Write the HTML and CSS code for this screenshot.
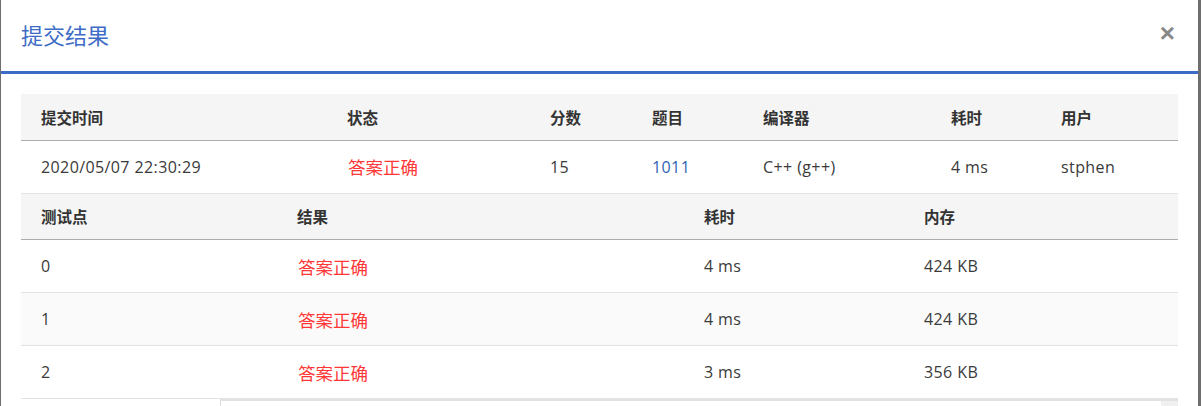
FILE: index.html
```html
<!DOCTYPE html>
<html lang="zh-CN">
<head>
<meta charset="utf-8">
<title>提交结果</title>
<link rel="stylesheet" href="styles.css">
</head>
<body>
<div class="modal">
  <div class="modal-header">
    <h4 class="modal-title">提交结果</h4>
    <span class="close">×</span>
  </div>
  <div class="modal-body">
    <table class="grid summary">
      <colgroup>
        <col style="width:306px"><col style="width:203px"><col style="width:102px"><col style="width:111px"><col style="width:188px"><col style="width:110px"><col style="width:137px">
      </colgroup>
      <thead>
        <tr><th>提交时间</th><th>状态</th><th>分数</th><th>题目</th><th>编译器</th><th>耗时</th><th>用户</th></tr>
      </thead>
      <tbody>
        <tr><td>2020/05/07 22:30:29</td><td class="ok">答案正确</td><td>15</td><td><a class="link">1011</a></td><td>C++ (g++)</td><td>4 ms</td><td>stphen</td></tr>
      </tbody>
    </table>
    <table class="grid cases">
      <colgroup>
        <col style="width:256px"><col style="width:407px"><col style="width:220px"><col style="width:274px">
      </colgroup>
      <thead>
        <tr><th>测试点</th><th>结果</th><th>耗时</th><th>内存</th></tr>
      </thead>
      <tbody>
        <tr><td>0</td><td class="ok">答案正确</td><td>4 ms</td><td>424 KB</td></tr>
        <tr class="alt"><td>1</td><td class="ok">答案正确</td><td>4 ms</td><td>424 KB</td></tr>
        <tr><td>2</td><td class="ok">答案正确</td><td>3 ms</td><td>356 KB</td></tr>
      </tbody>
    </table>
    <div class="below">
      <div class="below-inner"><span class="below-block"></span></div>
    </div>
  </div>
</div>
</body>
</html>
```

FILE: styles.css
```css
html, body {
  margin: 0;
  padding: 0;
}
body {
  background: #6e6e6e;
  width: 1201px;
  height: 406px;
  overflow: hidden;
  font-family: "Open Sans", "Noto Sans CJK SC", sans-serif;
  color: #333;
}
.modal {
  margin-left: 1px;
  width: 1197px;
  height: 406px;
  background: #fff;
}
.modal-header {
  height: 71px;
  border-bottom: 3px solid #3d6cc6;
  display: flex;
  align-items: center;
  justify-content: space-between;
  padding: 0 23px 0 20px;
}
.modal-title {
  margin: 0;
  font-family: "Noto Sans CJK SC", sans-serif;
  font-size: 22px;
  font-weight: normal;
  color: #3d6cc6;
  line-height: 1;
  padding-bottom: 3px;
}
.close {
  font-family: "Liberation Sans", sans-serif;
  font-size: 26px;
  font-weight: bold;
  color: #888;
  line-height: 1;
  padding-bottom: 6px;
}
.modal-body {
  padding: 20px 0 0 20px;
}
.grid {
  border-collapse: collapse;
  table-layout: fixed;
  width: 1157px;
}
.grid th {
  background: #f5f5f5;
  height: 45px;
  padding: 0 0 0 20px;
  text-align: left;
  font-family: "Noto Sans CJK SC", sans-serif;
  font-size: 15.5px;
  font-weight: bold;
  color: #333;
  border-bottom: 1px solid #acacac;
}
.grid thead tr {
  height: 46px;
}
.grid td {
  height: 52px;
  padding: 0 0 0 20px;
  font-size: 16px;
  letter-spacing: 0.4px;
  color: #3a3a3a;
  border-bottom: 1px solid #e3e3e3;
}
.grid tbody tr {
  height: 53px;
}
.grid td.ok {
  font-family: "Noto Sans CJK SC", sans-serif;
  color: #ff3737;
  font-size: 17.5px;
  letter-spacing: 0;
  padding-left: 21px;
}
.grid tr.alt td {
  background: #fafafa;
}
.link {
  color: #2f65b3;
  text-decoration: none;
}
.below {
  width: 1157px;
  padding-left: 199px;
  box-sizing: border-box;
}
.below-inner {
  height: 10px;
  border-top: 2px solid #e2e2e2;
  border-left: 1px solid #dcdcdc;
  display: flex;
  justify-content: flex-end;
}
.below-block {
  width: 17px;
  height: 10px;
  background: #f0f0f0;
}
```
